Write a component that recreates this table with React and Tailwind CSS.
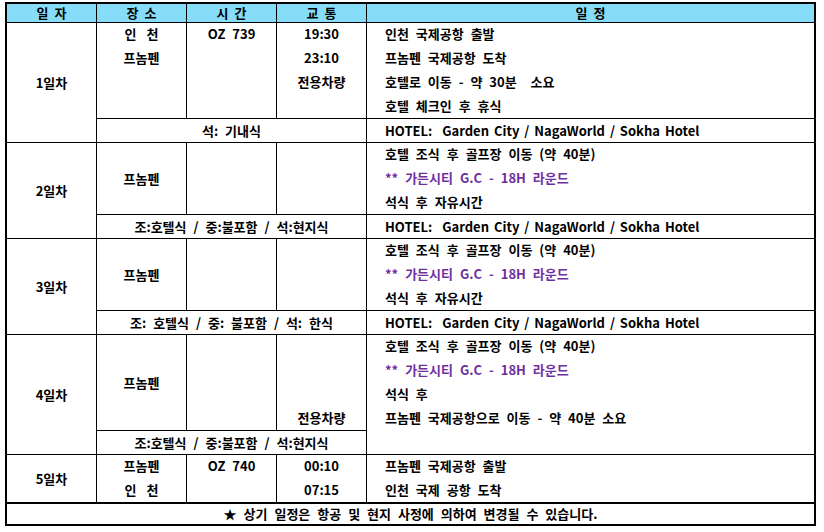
import React from "react";

const PURPLE = "text-[#7030a0]";

function Lines({ items, align = "center" }) {
  return (
    <div className="-mt-px flex flex-col">
      {items.map((t, i) => (
        <div
          key={i}
          className={`h-[24px] flex items-center whitespace-pre ${align === "center" ? "justify-center" : "justify-start"} ${t && t.purple ? PURPLE : ""}`}
        >
          {t && t.text !== undefined ? t.text : t}
        </div>
      ))}
    </div>
  );
}

function Cell({ children, className = "" }) {
  return <div className={`bg-white ${className}`}>{children}</div>;
}

const Incheon = () => (
  <span className="flex gap-[10px]">
    <span>인</span>
    <span>천</span>
  </span>
);

const HOTEL = "HOTEL:  Garden City / NagaWorld / Sokha Hotel";
const GOLF = { text: "** 가든시티 G.C - 18H 라운드", purple: true };

export default function App() {
  return (
    <div className="w-[824px] h-[532px] bg-white pt-[2px] pl-[5px]">
      <div
        className="w-[811px] border-2 border-black bg-black grid gap-px grid-cols-[89px_89px_89px_89px_447px] grid-rows-[18px_95px_23px_71px_23px_71px_23px_95px_23px_47px_21px] text-[13px] font-bold text-black [word-spacing:4px]"
        style={{ fontFamily: '"Noto Sans CJK KR", "Noto Sans", sans-serif' }}
      >
        {/* header */}
        {["일 자", "장 소", "시 간", "교 통", "일 정"].map((h) => (
          <div key={h} className="bg-[#87dcf8] flex items-center justify-center gap-[6px]">
            {h.split(" ").map((c) => (
              <span key={c}>{c}</span>
            ))}
          </div>
        ))}

        {/* Day 1 */}
        <Cell className="row-span-2 flex items-center justify-center">1일차</Cell>
        <Cell>
          <Lines items={[<Incheon key="a" />, "프놈펜"]} />
        </Cell>
        <Cell>
          <Lines items={["OZ 739"]} />
        </Cell>
        <Cell>
          <Lines items={["19:30", "23:10", "전용차량"]} />
        </Cell>
        <Cell className="pl-[18px]">
          <Lines
            align="left"
            items={["인천 국제공항 출발", "프놈펜 국제공항 도착", "호텔로 이동 - 약 30분  소요", "호텔 체크인 후 휴식"]}
          />
        </Cell>
        <Cell className="col-span-3 flex items-center justify-center">석: 기내식</Cell>
        <Cell className="pl-[18px] flex items-center whitespace-pre [word-spacing:2px]">{HOTEL}</Cell>

        {/* Day 2 */}
        <Cell className="row-span-2 flex items-center justify-center">2일차</Cell>
        <Cell className="flex items-center justify-center">프놈펜</Cell>
        <Cell />
        <Cell />
        <Cell className="pl-[18px]">
          <Lines align="left" items={["호텔 조식 후 골프장 이동 (약 40분)", GOLF, "석식 후 자유시간"]} />
        </Cell>
        <Cell className="col-span-3 flex items-center justify-center">조:호텔식 / 중:불포함 / 석:현지식</Cell>
        <Cell className="pl-[18px] flex items-center whitespace-pre [word-spacing:2px]">{HOTEL}</Cell>

        {/* Day 3 */}
        <Cell className="row-span-2 flex items-center justify-center">3일차</Cell>
        <Cell className="flex items-center justify-center">프놈펜</Cell>
        <Cell />
        <Cell />
        <Cell className="pl-[18px]">
          <Lines align="left" items={["호텔 조식 후 골프장 이동 (약 40분)", GOLF, "석식 후 자유시간"]} />
        </Cell>
        <Cell className="col-span-3 flex items-center justify-center">조: 호텔식 / 중: 불포함 / 석: 한식</Cell>
        <Cell className="pl-[18px] flex items-center whitespace-pre [word-spacing:2px]">{HOTEL}</Cell>

        {/* Day 4 */}
        <Cell className="row-span-2 flex items-center justify-center">4일차</Cell>
        <Cell className="flex items-center justify-center">프놈펜</Cell>
        <Cell />
        <Cell>
          <Lines items={["", "", "", "전용차량"]} />
        </Cell>
        <Cell className="row-span-2 pl-[18px]">
          <Lines
            align="left"
            items={["호텔 조식 후 골프장 이동 (약 40분)", GOLF, "석식 후", "프놈펜 국제공항으로 이동 - 약 40분 소요"]}
          />
        </Cell>
        <Cell className="col-span-3 flex items-center justify-center">조:호텔식 / 중:불포함 / 석:현지식</Cell>

        {/* Day 5 */}
        <Cell className="flex items-center justify-center">5일차</Cell>
        <Cell>
          <Lines items={["프놈펜", <Incheon key="b" />]} />
        </Cell>
        <Cell>
          <Lines items={["OZ 740"]} />
        </Cell>
        <Cell>
          <Lines items={["00:10", "07:15"]} />
        </Cell>
        <Cell className="pl-[18px]">
          <Lines align="left" items={["프놈펜 국제공항 출발", "인천 국제 공항 도착"]} />
        </Cell>

        {/* footer */}
        <Cell className="col-span-5 border-t border-black flex items-center justify-center">
          ★ 상기 일정은 항공 및 현지 사정에 의하여 변경될 수 있습니다.
        </Cell>
      </div>
    </div>
  );
}
